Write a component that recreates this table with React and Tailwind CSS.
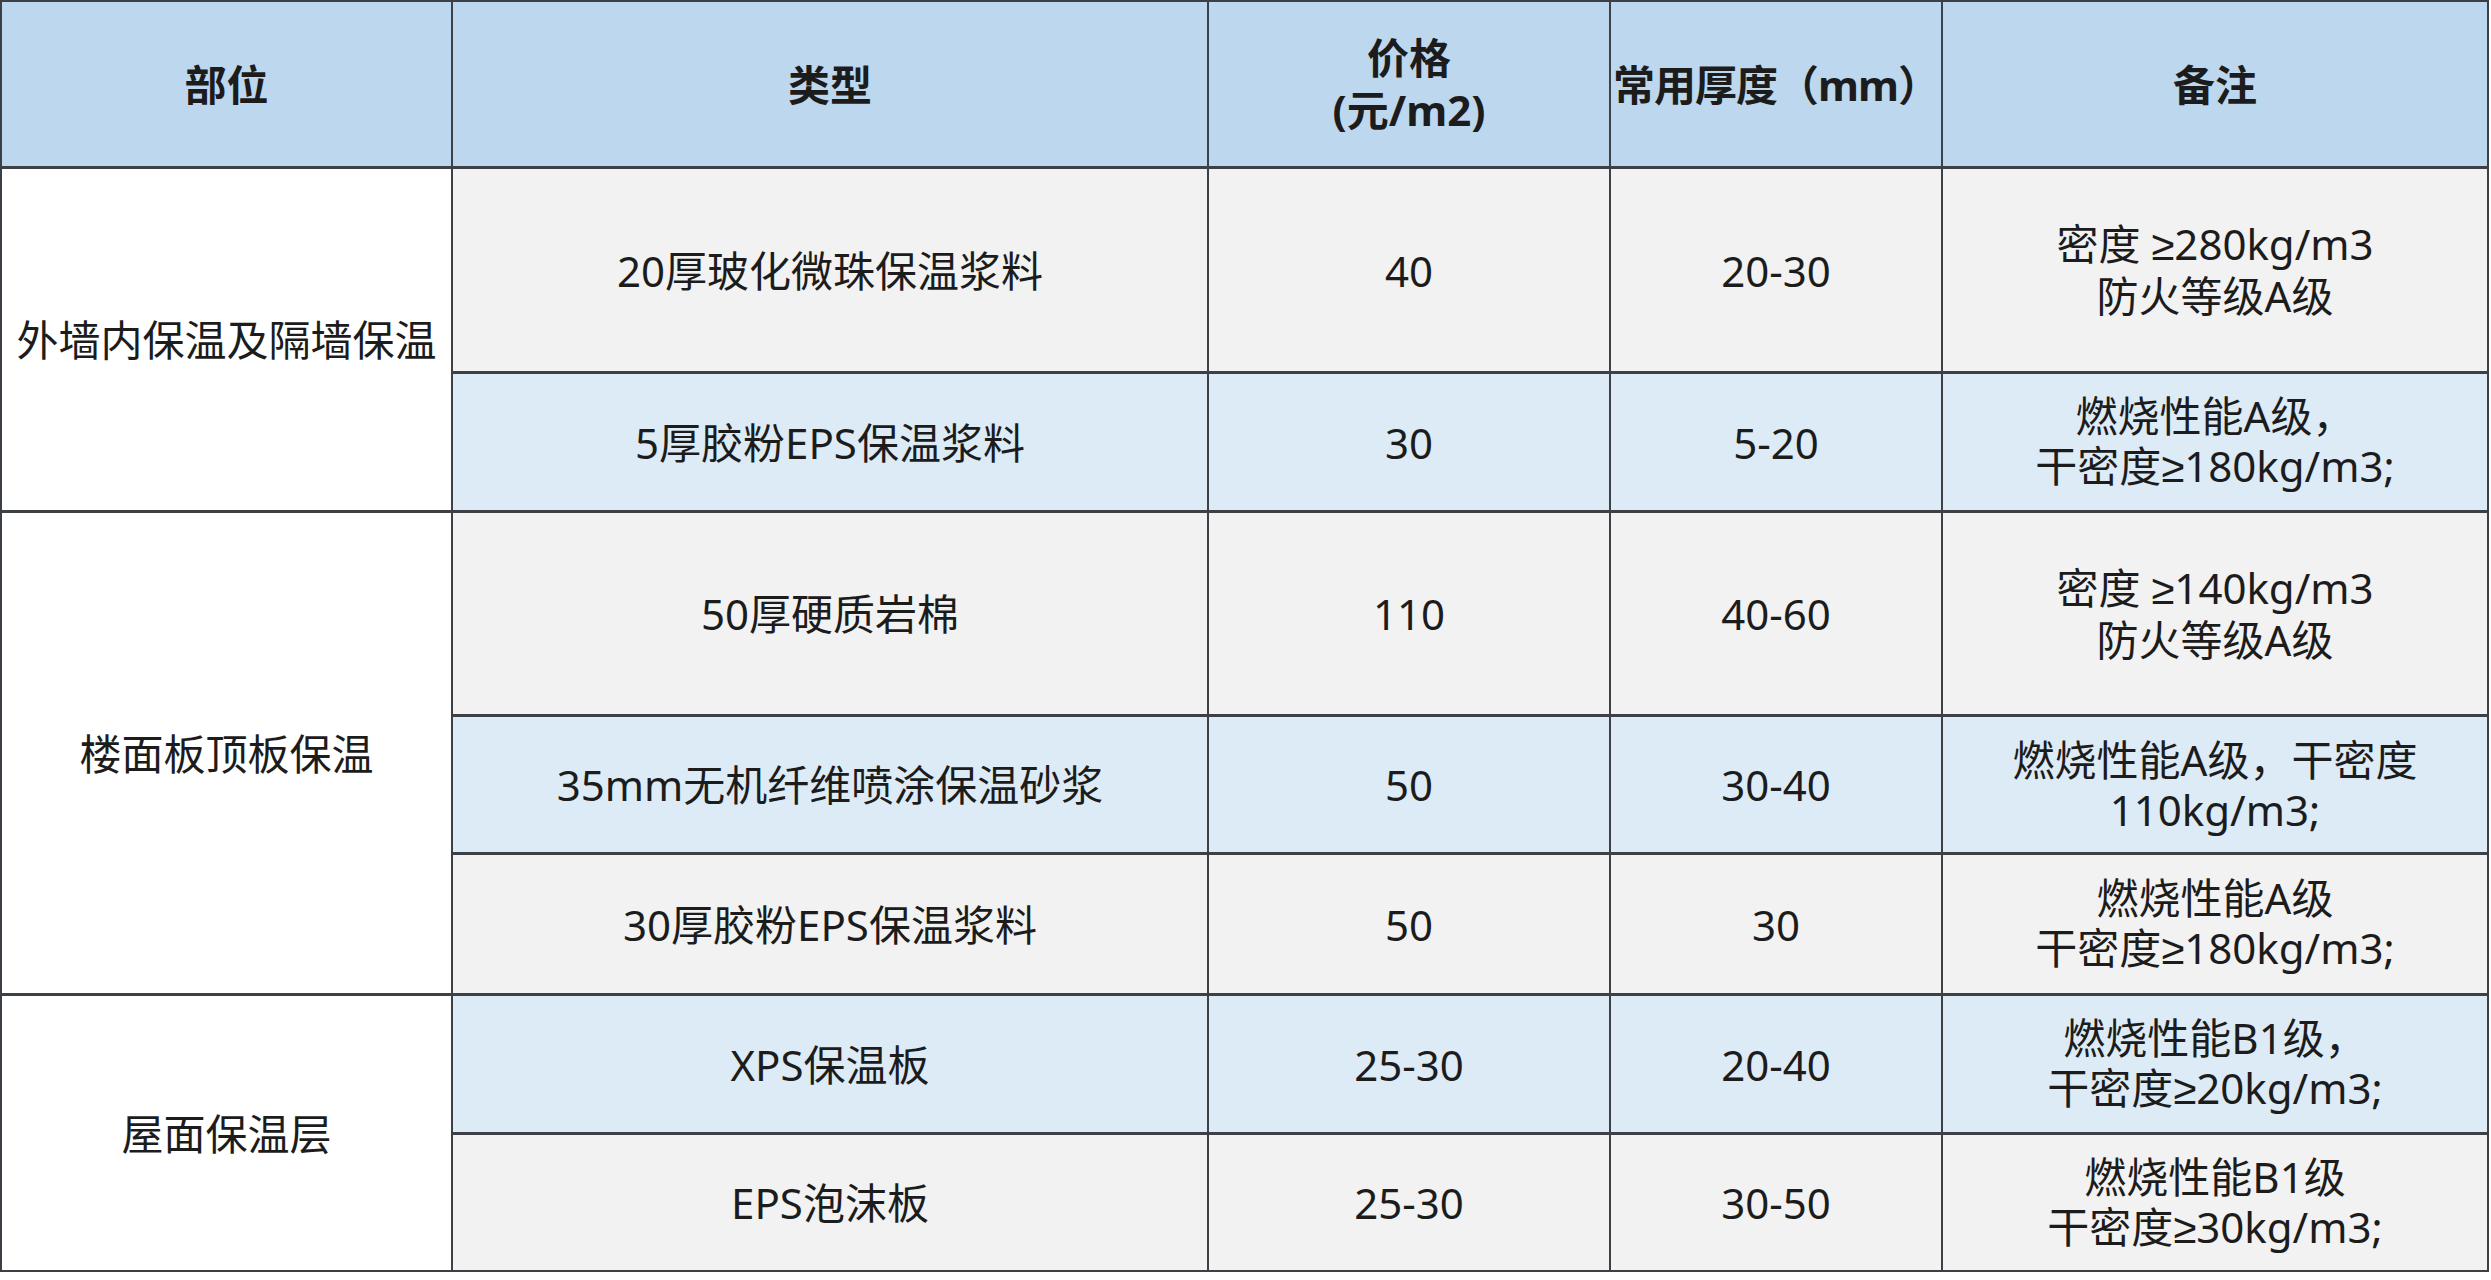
import React from 'react';

const rows = [
  { type: '20厚玻化微珠保温浆料', price: '40', thick: '20-30', note: ['密度 ≥280kg/m3', '防火等级A级'], bg: 'bg-[#f2f2f2]' },
  { type: '5厚胶粉EPS保温浆料', price: '30', thick: '5-20', note: ['燃烧性能A级，', '干密度≥180kg/m3;'], bg: 'bg-[#ddebf7]' },
  { type: '50厚硬质岩棉', price: '110', thick: '40-60', note: ['密度 ≥140kg/m3', '防火等级A级'], bg: 'bg-[#f2f2f2]' },
  { type: '35mm无机纤维喷涂保温砂浆', price: '50', thick: '30-40', note: ['燃烧性能A级，干密度', '110kg/m3;'], bg: 'bg-[#ddebf7]' },
  { type: '30厚胶粉EPS保温浆料', price: '50', thick: '30', note: ['燃烧性能A级', '干密度≥180kg/m3;'], bg: 'bg-[#f2f2f2]' },
  { type: 'XPS保温板', price: '25-30', thick: '20-40', note: ['燃烧性能B1级，', '干密度≥20kg/m3;'], bg: 'bg-[#ddebf7]' },
  { type: 'EPS泡沫板', price: '25-30', thick: '30-50', note: ['燃烧性能B1级', '干密度≥30kg/m3;'], bg: 'bg-[#f2f2f2]' },
];

const groups = [
  { label: '外墙内保温及隔墙保温', start: 'row-start-2', span: 'row-span-2' },
  { label: '楼面板顶板保温', start: 'row-start-4', span: 'row-span-3' },
  { label: '屋面保温层', start: 'row-start-7', span: 'row-span-2' },
];

const Cell = ({ className = '', children }) => (
  <div className={`flex items-center justify-center text-center ${className}`}>{children}</div>
);

// the CJK font draws ≥ slanted, the reference has the flat-bar one
const NoteLine = ({ text }) => {
  const parts = text.split('≥');
  if (parts.length === 1) return <span>{text}</span>;
  return (
    <span>
      {parts[0]}
      <span className="font-['Liberation_Sans',sans-serif]">≥</span>
      {parts[1]}
    </span>
  );
};

export default function App() {
  return (
    <div className="w-[2491px] h-[1280px] bg-white font-['Noto_Sans','Noto_Sans_CJK_SC',sans-serif] text-[42px] text-[#1c1c1c]">
      <div className="w-[2489px] border-2 border-[#3b4047] bg-[#3d4146] grid grid-cols-[449px_754px_400px_330px_544px] grid-rows-[164px_202px_136px_201px_135px_138px_136px_135px] gap-x-[2px] gap-y-[3px]">
        <Cell className="bg-[#bdd7ee] font-bold">部位</Cell>
        <Cell className="bg-[#bdd7ee] font-bold">类型</Cell>
        <Cell className="bg-[#bdd7ee] font-bold flex-col leading-[52px]">
          <span>价格</span>
          <span>(元/m2)</span>
        </Cell>
        <Cell className="bg-[#bdd7ee] font-bold whitespace-nowrap tracking-[-1px]">常用厚度（mm）</Cell>
        <Cell className="bg-[#bdd7ee] font-bold">备注</Cell>

        {groups.map((g) => (
          <Cell key={g.label} className={`bg-white col-start-1 ${g.start} ${g.span}`}>
            {g.label}
          </Cell>
        ))}

        {rows.map((r, i) => (
          <React.Fragment key={i}>
            <Cell className={`${r.bg} col-start-2`}>{r.type}</Cell>
            <Cell className={r.bg}>{r.price}</Cell>
            <Cell className={r.bg}>{r.thick}</Cell>
            <Cell className={`${r.bg} flex-col leading-[50px] whitespace-nowrap`}>
              {r.note.map((n) => (
                <NoteLine key={n} text={n} />
              ))}
            </Cell>
          </React.Fragment>
        ))}
      </div>
    </div>
  );
}
